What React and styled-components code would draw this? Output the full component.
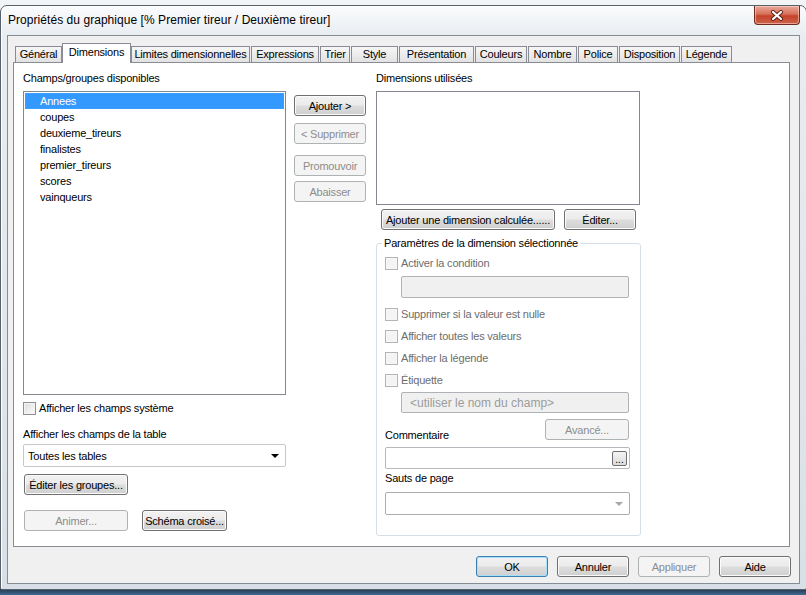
import React from "react";
import styled, { createGlobalStyle, css } from "styled-components";

const GlobalStyle = createGlobalStyle`
  html, body {
    margin: 0;
    padding: 0;
  }
  body {
    background: linear-gradient(to bottom, #f3f4f5 0px, #dfe3e7 588px, #26384a 589px, #3e6a93 595px);
    font-family: "Liberation Sans", Arial, sans-serif;
    font-size: 11px;
    color: #000;
  }
`;

const Desktop = styled.div`
  width: 806px;
  height: 595px;
  overflow: hidden;
  padding-top: 5px;
  box-sizing: border-box;
`;

const Window = styled.div`
  width: 807px;
  height: 585px;
  box-sizing: border-box;
  border: 1px solid #56616c;
  border-radius: 7px 7px 2px 2px;
  background: linear-gradient(to bottom, #fbfcfd 0%, #e8edf1 5%, #e1e7ec 50%, #d8dfe6 100%);
  box-shadow: inset 1px 1px 0 #ffffff;
  padding: 0 6px 5px 6px;
  display: flex;
  flex-direction: column;
`;

const TitleBar = styled.div`
  height: 29px;
  display: flex;
  justify-content: space-between;
  align-items: flex-start;
  flex-shrink: 0;
`;

const Title = styled.div`
  margin: 7px 0 0 1px;
  font-size: 12px;
  line-height: 15px;
  letter-spacing: 0.05px;
  color: #000;
`;

const CloseButton = styled.div`
  width: 46px;
  height: 19px;
  box-sizing: border-box;
  border: 1px solid #6d2a1f;
  border-top: none;
  border-radius: 0 0 4px 4px;
  background: linear-gradient(to bottom, #e9a99b 0%, #d8705a 45%, #c4432a 55%, #d0614a 100%);
  box-shadow: inset 0 0 0 1px rgba(255, 220, 210, 0.55);
  display: flex;
  align-items: center;
  justify-content: center;
`;

const Client = styled.div`
  flex: 1;
  background: #f0f0f0;
  border: 1px solid #878d94;
  padding: 7px 9px 0 5px;
  display: flex;
  flex-direction: column;
`;

const TabStrip = styled.div`
  display: flex;
  align-items: flex-end;
  height: 19px;
  padding-left: 2px;
`;

const Tab = styled.div`
  position: relative;
  width: ${(p) => p.$w}px;
  height: 16px;
  box-sizing: border-box;
  border: 1px solid #898c95;
  border-bottom: none;
  margin-right: 1px;
  background: linear-gradient(to bottom, #f7f7f7 0%, #ececec 50%, #e2e2e2 100%);
  text-align: center;
  line-height: 15px;
  letter-spacing: -0.2px;
  white-space: nowrap;
  ${(p) =>
    p.$active &&
    css`
      height: 20px;
      margin-left: -1px;
      margin-right: 0;
      margin-bottom: -1px;
      z-index: 1;
      background: #ffffff;
      line-height: 17px;
    `}
`;

const Panel = styled.div`
  height: 485px;
  box-sizing: border-box;
  background: #ffffff;
  border: 1px solid #898c95;
  padding: 8px 0 0 9px;
  display: flex;
  align-items: flex-start;
`;

const Column = styled.div`
  width: ${(p) => p.$w}px;
  margin-left: ${(p) => p.$ml || 0}px;
  padding-top: ${(p) => p.$pt || 0}px;
  display: flex;
  flex-direction: column;
  flex-shrink: 0;
`;

const Label = styled.div`
  line-height: 14px;
  letter-spacing: -0.2px;
  margin-top: ${(p) => p.$mt || 0}px;
  margin-bottom: ${(p) => p.$mb || 0}px;
  white-space: nowrap;
  color: ${(p) => (p.$disabled ? "#6d6d6d" : "#000")};
`;

const ListBox = styled.div`
  height: ${(p) => p.$h}px;
  width: ${(p) => p.$w || 263}px;
  box-sizing: border-box;
  border: 1px solid #828790;
  background: #ffffff;
  padding: 1px;
  margin-top: 6px;
`;

const ListItem = styled.div`
  height: 16px;
  line-height: 16px;
  padding-left: 15px;
  letter-spacing: -0.2px;
  ${(p) =>
    p.$selected &&
    css`
      background: #3399ff;
      color: #ffffff;
      outline: 1px dotted #c88438;
      outline-offset: -1px;
    `}
`;

const CheckRow = styled.div`
  display: flex;
  align-items: center;
  gap: 3px;
  height: ${(p) => p.$h || 16}px;
  margin-top: ${(p) => p.$mt || 0}px;
  letter-spacing: -0.2px;
  color: ${(p) => (p.$disabled ? "#6d6d6d" : "#000")};
`;

const CheckBox = styled.span`
  width: 13px;
  height: 13px;
  box-sizing: border-box;
  border: 1px solid ${(p) => (p.$disabled ? "#b4b4b4" : "#8e8f8f")};
  background: ${(p) =>
    p.$disabled
      ? "#f4f4f4"
      : "linear-gradient(135deg, #dcdcdc 0%, #f0f0f0 60%, #fbfbfb 100%)"};
  box-shadow: inset 0 0 0 1px ${(p) => (p.$disabled ? "#f7f7f7" : "#f4f4f4")};
  flex-shrink: 0;
`;

const Combo = styled.div`
  height: 23px;
  width: ${(p) => p.$w}px;
  box-sizing: border-box;
  border: 1px solid ${(p) => (p.$light ? "#c5c9ce" : "#abadb3")};
  border-radius: 2px;
  background: #ffffff;
  margin-top: ${(p) => p.$mt || 0}px;
  padding: 0 6px 0 4px;
  display: flex;
  align-items: center;
  justify-content: space-between;
  letter-spacing: -0.2px;
`;

const Arrow = styled.span`
  width: 0;
  height: 0;
  border-left: 4px solid transparent;
  border-right: 4px solid transparent;
  border-top: 4px solid ${(p) => (p.$disabled ? "#a8a8a8" : "#000")};
  margin-top: 1px;
`;

const Button = styled.button`
  width: ${(p) => p.$w}px;
  height: ${(p) => p.$h || 21}px;
  margin-top: ${(p) => p.$mt || 0}px;
  margin-left: ${(p) => p.$ml || 0}px;
  box-sizing: border-box;
  padding: 0;
  font: inherit;
  letter-spacing: -0.2px;
  color: #000;
  border: 1px solid #707070;
  border-radius: 3px;
  background: linear-gradient(to bottom, #f2f2f2 0%, #ebebeb 48%, #dddddd 52%, #cfcfcf 100%);
  box-shadow: inset 0 0 0 1px #fbfbfb;
  flex-shrink: 0;
  white-space: nowrap;
  ${(p) =>
    p.$disabled &&
    css`
      color: #8d8d8d;
      border-color: #adb2b5;
      background: #f4f4f4;
      box-shadow: none;
    `}
  ${(p) =>
    p.$focus &&
    css`
      border-color: #3c7fb1;
      box-shadow: inset 0 0 0 1px #a6e0fb;
    `}
`;

const ButtonRow = styled.div`
  display: flex;
  gap: ${(p) => p.$gap || 9}px;
  margin-top: ${(p) => p.$mt || 0}px;
  padding-left: ${(p) => p.$pl || 0}px;
`;

const GroupBox = styled.fieldset`
  width: 265px;
  box-sizing: border-box;
  margin: 6px 0 0 0;
  padding: 0 0 20px 8px;
  border: 1px solid #d5dfe5;
  border-radius: 3px;
  min-width: 0;
  display: flex;
  flex-direction: column;
`;

const Legend = styled.legend`
  padding: 0 2px;
  margin-left: -3px;
  line-height: 14px;
  letter-spacing: -0.2px;
`;

const TextField = styled.div`
  width: ${(p) => p.$w}px;
  height: ${(p) => p.$h || 22}px;
  box-sizing: border-box;
  margin-top: ${(p) => p.$mt || 0}px;
  margin-left: ${(p) => p.$ml || 0}px;
  border: 1px solid ${(p) => (p.$disabled ? "#afb2b6" : "#b5b8bc")};
  border-radius: 2px;
  background: ${(p) => (p.$disabled ? "#f0f0f0" : "#ffffff")};
  display: flex;
  align-items: center;
  justify-content: flex-end;
  padding: 0 2px;
`;

const Placeholder = styled.span`
  flex: 1;
  padding-left: 6px;
  font-size: 12px;
  color: #9b9b9b;
`;

const MiniButton = styled.span`
  width: 15px;
  height: 15px;
  box-sizing: border-box;
  border: 1px solid #707070;
  border-radius: 2px;
  background: linear-gradient(to bottom, #f4f4f4, #dcdcdc);
  font-size: 10px;
  line-height: 15px;
  text-align: center;
  letter-spacing: 0;
`;

const SplitRow = styled.div`
  width: 244px;
  display: flex;
  justify-content: space-between;
  align-items: flex-end;
  margin-top: ${(p) => p.$mt || 0}px;
`;

const Footer = styled.div`
  display: flex;
  justify-content: flex-end;
  gap: 9px;
  margin: 9px -1px 0 0;
`;

const tabs = [
  ["Général", 47],
  ["Dimensions", 69],
  ["Limites dimensionnelles", 119],
  ["Expressions", 68],
  ["Trier", 30],
  ["Style", 47],
  ["Présentation", 75],
  ["Couleurs", 52],
  ["Nombre", 49],
  ["Police", 40],
  ["Disposition", 61],
  ["Légende", 51],
];

const fields = [
  "Annees",
  "coupes",
  "deuxieme_tireurs",
  "finalistes",
  "premier_tireurs",
  "scores",
  "vainqueurs",
];

const Check = ({ children, disabled, h, mt }) => (
  <CheckRow $disabled={disabled} $h={h} $mt={mt}>
    <CheckBox $disabled={disabled} />
    {children}
  </CheckRow>
);

const App = () => {
  return (
    <>
      <GlobalStyle />
      <Desktop>
        <Window>
          <TitleBar>
            <Title>Propriétés du graphique [% Premier tireur / Deuxième tireur]</Title>
            <CloseButton>
              <svg width="14" height="11" viewBox="0 0 14 11">
                <path d="M3 2 L11 9 M11 2 L3 9" stroke="#5a2018" strokeWidth="4" strokeLinecap="round" />
                <path d="M3 2 L11 9 M11 2 L3 9" stroke="#ffffff" strokeWidth="2.2" strokeLinecap="round" />
              </svg>
            </CloseButton>
          </TitleBar>
          <Client>
            <TabStrip>
              {tabs.map(([name, w]) => (
                <Tab key={name} $w={w} $active={name === "Dimensions"}>
                  {name}
                </Tab>
              ))}
            </TabStrip>
            <Panel>
              <Column $w={263}>
                <Label>Champs/groupes disponibles</Label>
                <ListBox $h={304}>
                  {fields.map((f, i) => (
                    <ListItem key={f} $selected={i === 0}>
                      {f}
                    </ListItem>
                  ))}
                </ListBox>
                <Check mt={5}>Afficher les champs système</Check>
                <Label $mt={11}>Afficher les champs de la table</Label>
                <Combo $w={263} $mt={3} $light>
                  <span>Toutes les tables</span>
                  <Arrow />
                </Combo>
                <Button $w={104} $mt={7} $ml={1}>
                  Éditer les groupes...
                </Button>
                <ButtonRow $mt={15} $pl={1} $gap={14}>
                  <Button $w={104} $disabled>
                    Animer...
                  </Button>
                  <Button $w={85}>Schéma croisé...</Button>
                </ButtonRow>
              </Column>

              <Column $w={72} $ml={8} $pt={24}>
                <Button $w={72}>Ajouter &gt;</Button>
                <Button $w={72} $mt={7} $disabled>
                  &lt; Supprimer
                </Button>
                <Button $w={72} $mt={11} $disabled>
                  Promouvoir
                </Button>
                <Button $w={72} $mt={5} $disabled>
                  Abaisser
                </Button>
              </Column>

              <Column $w={265} $ml={10}>
                <Label>Dimensions utilisées</Label>
                <ListBox $h={114} $w={264} />
                <ButtonRow $mt={4} $pl={5}>
                  <Button $w={174}>Ajouter une dimension calculée......</Button>
                  <Button $w={72}>Éditer...</Button>
                </ButtonRow>
                <GroupBox>
                  <Legend>Paramètres de la dimension sélectionnée</Legend>
                  <Check disabled h={22} mt={2}>
                    Activer la condition
                  </Check>
                  <TextField $w={228} $ml={16} $mt={2} $disabled />
                  <Check disabled h={22} mt={5}>
                    Supprimer si la valeur est nulle
                  </Check>
                  <Check disabled h={22}>
                    Afficher toutes les valeurs
                  </Check>
                  <Check disabled h={22}>
                    Afficher la légende
                  </Check>
                  <Check disabled h={22}>
                    Étiquette
                  </Check>
                  <TextField $w={228} $h={21} $ml={16} $mt={1} $disabled>
                    <Placeholder>&lt;utiliser le nom du champ&gt;</Placeholder>
                  </TextField>
                  <SplitRow $mt={6}>
                    <Label $mb={-2}>Commentaire</Label>
                    <Button $w={84} $disabled>
                      Avancé...
                    </Button>
                  </SplitRow>
                  <TextField $w={245} $mt={7}>
                    <MiniButton>...</MiniButton>
                  </TextField>
                  <Label $mt={2}>Sauts de page</Label>
                  <Combo $w={245} $mt={7}>
                    <span />
                    <Arrow $disabled />
                  </Combo>
                </GroupBox>
              </Column>
            </Panel>
            <Footer>
              <Button $w={72} $focus>
                OK
              </Button>
              <Button $w={72}>Annuler</Button>
              <Button $w={72} $disabled>
                Appliquer
              </Button>
              <Button $w={72}>Aide</Button>
            </Footer>
          </Client>
        </Window>
      </Desktop>
    </>
  );
};

export default App;
